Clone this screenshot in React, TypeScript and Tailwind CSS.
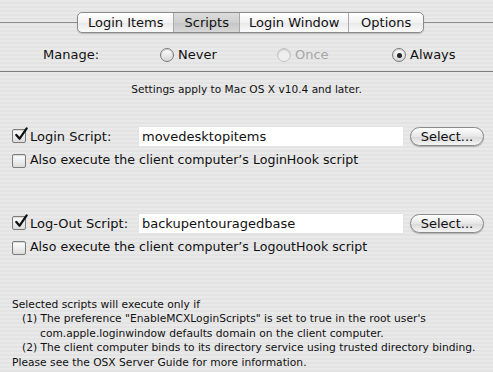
import React from "react";

const tabs = ["Login Items", "Scripts", "Login Window", "Options"];
const tabWidths = ["w-[96px]", "w-[66px]", "w-[110px]", "w-[75px]"];

function Radio({ checked, disabled }: { checked?: boolean; disabled?: boolean }) {
  return (
    <span
      className={`relative inline-flex h-[14px] w-[14px] shrink-0 items-center justify-center rounded-full border ${
        disabled ? "border-[#c4c4c4] bg-[#eeeeee]" : "border-[#7a7a7a] bg-[linear-gradient(#ffffff,#d6d6d6)]"
      } shadow-[inset_0_1px_1px_rgba(0,0,0,0.2)]`}
    >
      {checked && <span className="h-[5px] w-[5px] rounded-full bg-[#222]" />}
    </span>
  );
}

function Check({ checked }: { checked?: boolean }) {
  return (
    <span className="relative inline-block h-[14px] w-[14px] shrink-0 rounded-[2px] border border-[#7c7c7c] bg-[linear-gradient(#ffffff,#dcdcdc)] shadow-[inset_0_1px_1px_rgba(0,0,0,0.15)]">
      {checked && (
        <svg viewBox="0 0 16 16" className="absolute -top-[3px] left-[1px] h-[15px] w-[15px]">
          <path d="M2.5 8.5 L6 12.5 L13.5 1.5" fill="none" stroke="#111" strokeWidth="2.4" strokeLinecap="round" strokeLinejoin="round" />
        </svg>
      )}
    </span>
  );
}

function ScriptBlock({ label, value, hook }: { label: string; value: string; hook: string }) {
  return (
    <div className="flex flex-col gap-[6px]">
      <div className="flex h-[21px] items-center">
        <span className="ml-[12px] flex shrink-0"><Check checked /></span>
        <span className="ml-[4px] w-[108px] shrink-0 text-[13px]">{label}</span>
        <div className="flex h-[21px] w-[266px] shrink-0 items-center bg-white pl-[4px] text-[13px] shadow-[inset_0_0_0_1px_#e4e4e4]">
          {value}
        </div>
        <button className="ml-[6px] flex h-[19px] w-[74px] shrink-0 items-center justify-center rounded-full border border-[#8a8a8a] bg-[linear-gradient(#ffffff,#e6e6e6_50%,#d8d8d8_51%,#f4f4f4)] text-[13px] shadow-[0_1px_1px_rgba(0,0,0,0.25)]">
          Select...
        </button>
      </div>
      <div className="flex h-[16px] items-center">
        <span className="ml-[12px] flex shrink-0"><Check /></span>
        <span className="ml-[4px] whitespace-nowrap text-[12.6px]">Also execute the client computer’s {hook} script</span>
      </div>
    </div>
  );
}

export default function App() {
  return (
    <div
      className="h-[372px] w-[493px] overflow-hidden bg-[repeating-linear-gradient(#e9e9e9_0px,#e9e9e9_2px,#e3e3e3_2px,#e3e3e3_4px)] text-[#111]"
      style={{ fontFamily: '"DejaVu Sans", "Noto Sans", sans-serif' }}
    >
      {/* tab bar */}
      <div className="relative pt-[12px]">
        <div className="absolute left-0 right-0 top-[22px] h-px bg-[#8c8c8c]" />
        <div className="relative ml-[77px] flex h-[21px] w-[347px] overflow-hidden rounded-[5px] border border-[#8a8a8a] bg-[linear-gradient(#ffffff,#f2f2f2_50%,#e8e8e8_51%,#fbfbfb)] shadow-[0_1px_1px_rgba(0,0,0,0.2)]">
          {tabs.map((t, i) => (
            <div
              key={t}
              className={`flex ${tabWidths[i]} items-center justify-center text-[13px] ${i > 0 ? "border-l border-[#a9a9a9]" : ""} ${
                t === "Scripts" ? "bg-[linear-gradient(#dcdcdc,#cfcfcf_50%,#c4c4c4_51%,#d8d8d8)]" : ""
              }`}
            >
              {t}
            </div>
          ))}
        </div>
      </div>

      {/* manage row */}
      <div className="mt-[12px] flex h-[20px] items-center text-[13px]">
        <span className="ml-[43px] w-[117px] shrink-0">Manage:</span>
        <Radio />
        <span className="ml-[4px] w-[99px] shrink-0">Never</span>
        <Radio disabled />
        <span className="ml-[4px] w-[97px] shrink-0 text-[#a6a6a6]">Once</span>
        <Radio checked />
        <span className="ml-[4px]">Always</span>
      </div>

      <div className="mt-[6px] h-px bg-[#7e7e7e]" />
      <div className="mt-[10px] text-center text-[10.6px]">Settings apply to Mac OS X v10.4 and later.</div>

      <div className="mt-[28px]">
        <ScriptBlock label="Login Script:" value="movedesktopitems" hook="LoginHook" />
      </div>
      <div className="mt-[44px]">
        <ScriptBlock label="Log-Out Script:" value="backupentouragedbase" hook="LogoutHook" />
      </div>

      <div className="ml-[12px] mt-[42px] whitespace-nowrap text-[10.7px] leading-[14.5px]">
        <div>Selected scripts will execute only if</div>
        <div className="pl-[10px]">(1) The preference "EnableMCXLoginScripts" is set to true in the root user's</div>
        <div className="pl-[28px]">com.apple.loginwindow defaults domain on the client computer.</div>
        <div className="pl-[10px]">(2) The client computer binds to its directory service using trusted directory binding.</div>
        <div>Please see the OSX Server Guide for more information.</div>
      </div>
    </div>
  );
}
